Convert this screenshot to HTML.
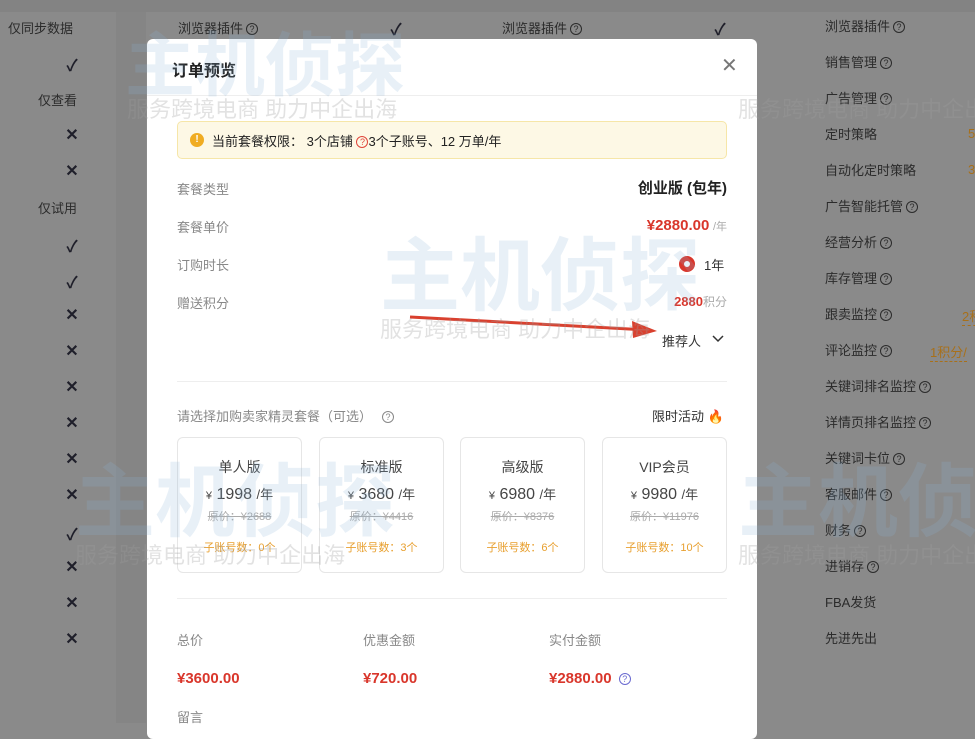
<!DOCTYPE html>
<html><head><meta charset="utf-8"><style>
*{margin:0;padding:0;box-sizing:border-box}
body{width:975px;height:723px;overflow:hidden;position:relative;background:#8a8a8a;font-family:"Liberation Sans","Noto Sans CJK SC",sans-serif;font-size:13px;color:#222}
.a{position:absolute;white-space:nowrap}
.bg{color:#2b2b2b;font-size:13px}
.ic{color:#1f1f2a;font-size:16px;font-weight:bold;width:20px;text-align:center}
.q{display:inline-block;width:12px;height:12px;border:1px solid currentColor;border-radius:50%;font-size:9px;line-height:10px;text-align:center;vertical-align:1px;margin-left:3px}
.modal{position:absolute;left:147px;top:39px;width:610px;height:700px;background:#fff;border-radius:6px}
.lbl{color:#888;font-size:13px}
.red{color:#d9362b}
.card{position:absolute;top:398px;width:125px;height:136px;border:1px solid #e6e6e6;border-radius:6px;text-align:center}
.card .t{margin-top:19px;font-size:14px;color:#444}
.card .p{margin-top:7px;font-size:16px;color:#444}
.card .p small{font-size:11px}
.card .p span{font-size:13px}
.card .o{margin-top:4px;font-size:11px;color:#aaa;text-decoration:line-through}
.card .s{margin-top:15px;font-size:11px;color:#e8a030}
.wm{position:absolute;color:rgba(140,180,215,.2);font-weight:bold;white-space:nowrap}
.ws{position:absolute;white-space:nowrap;font-size:22px;color:rgba(160,160,160,.3)}
</style></head><body>
<div class="a" style="left:116px;top:0;width:30px;height:723px;background:#858585"></div>
<div class="a" style="left:0;top:0;width:975px;height:12px;background:#838383"></div>
<div class="a bg" style="left:8px;top:18px">仅同步数据</div>
<div class="a bg" style="left:38px;top:90px">仅查看</div>
<div class="a bg" style="left:38px;top:198px">仅试用</div>
<div class="a ic" style="left:62px;top:52px">✓</div>
<div class="a ic" style="left:62px;top:125px">✕</div>
<div class="a ic" style="left:62px;top:161px">✕</div>
<div class="a ic" style="left:62px;top:233px">✓</div>
<div class="a ic" style="left:62px;top:269px">✓</div>
<div class="a ic" style="left:62px;top:305px">✕</div>
<div class="a ic" style="left:62px;top:341px">✕</div>
<div class="a ic" style="left:62px;top:377px">✕</div>
<div class="a ic" style="left:62px;top:413px">✕</div>
<div class="a ic" style="left:62px;top:449px">✕</div>
<div class="a ic" style="left:62px;top:485px">✕</div>
<div class="a ic" style="left:62px;top:521px">✓</div>
<div class="a ic" style="left:62px;top:557px">✕</div>
<div class="a ic" style="left:62px;top:593px">✕</div>
<div class="a ic" style="left:62px;top:629px">✕</div>
<div class="a bg" style="left:178px;top:18px">浏览器插件<span class="q">?</span></div>
<div class="a ic" style="left:386px;top:16px">✓</div>
<div class="a bg" style="left:502px;top:18px">浏览器插件<span class="q">?</span></div>
<div class="a ic" style="left:710px;top:16px">✓</div>
<div class="a bg" style="left:825px;top:9px;line-height:36px">浏览器插件<span class="q">?</span><br>销售管理<span class="q">?</span><br>广告管理<span class="q">?</span><br>定时策略<br>自动化定时策略<br>广告智能托管<span class="q">?</span><br>经营分析<span class="q">?</span><br>库存管理<span class="q">?</span><br>跟卖监控<span class="q">?</span><br>评论监控<span class="q">?</span><br>关键词排名监控<span class="q">?</span><br>详情页排名监控<span class="q">?</span><br>关键词卡位<span class="q">?</span><br>客服邮件<span class="q">?</span><br>财务<span class="q">?</span><br>进销存<span class="q">?</span><br>FBA发货<br>先进先出</div>
<div class="a" style="left:968px;top:126px;color:#a8701a">5</div>
<div class="a" style="left:968px;top:162px;color:#a8701a">3</div>
<div class="a" style="left:962px;top:306px;color:#a8701a;border-bottom:1px dashed #a8701a">2积</div>
<div class="a" style="left:930px;top:342px;color:#a8701a;border-bottom:1px dashed #a8701a">1积分/</div>
<div class="modal">
 <div class="a" style="left:25px;top:18px;font-size:16px;font-weight:bold;color:#222">订单预览</div>
 <div class="a" style="left:574px;top:14px;font-size:20px;color:#777">✕</div>
 <div class="a" style="left:0;top:56px;width:610px;height:1px;background:#eee"></div>
 <div class="a" style="left:30px;top:82px;width:550px;height:38px;background:#fdf8e5;border:1px solid #f6e6a8;border-radius:5px"></div>
 <div class="a" style="left:43px;top:94px;width:14px;height:14px;border-radius:50%;background:#f0ac22;color:#fff;font-size:10px;text-align:center;line-height:14px;font-weight:bold">!</div>
 <div class="a" style="left:65px;top:92px;color:#222">当前套餐权限： 3个店铺 <span class="q" style="color:#e0453a;margin:0">?</span>3个子账号、12 万单/年</div>
 <div class="a lbl" style="left:30px;top:140px">套餐类型</div>
 <div class="a" style="right:30px;top:138px;font-size:15px;font-weight:bold;color:#222">创业版 (包年)</div>
 <div class="a lbl" style="left:30px;top:178px">套餐单价</div>
 <div class="a" style="right:30px;top:178px"><span class="red" style="font-size:15px;font-weight:bold">¥2880.00</span> <span style="color:#aaa;font-size:11px">/年</span></div>
 <div class="a lbl" style="left:30px;top:216px">订购时长</div>
 <div class="a" style="left:532px;top:217px;width:16px;height:16px;border-radius:50%;border:5px solid #d9362b"></div>
 <div class="a" style="left:557px;top:216px;color:#333">1年</div>
 <div class="a lbl" style="left:30px;top:254px">赠送积分</div>
 <div class="a" style="right:30px;top:254px"><span class="red" style="font-size:13px;font-weight:bold">2880</span><span style="color:#aaa;font-size:12px">积分</span></div>
 <svg class="a" style="left:260px;top:270px" width="255" height="30"><line x1="3" y1="8" x2="240" y2="21" stroke="#d9402e" stroke-width="3"/><path d="M225 12 L250 22 L226 29 Z" fill="#d9402e"/></svg>
 <div class="a" style="left:515px;top:292px;color:#333">推荐人</div>
 <svg class="a" style="left:565px;top:295px" width="12" height="10"><path d="M1 2 L6 7 L11 2" stroke="#333" stroke-width="1.5" fill="none"/></svg>
 <div class="a" style="left:30px;top:342px;width:550px;height:1px;background:#eee"></div>
 <div class="a lbl" style="left:30px;top:367px">请选择加购卖家精灵套餐（可选）<span class="q" style="margin-left:10px">?</span></div>
 <div class="a" style="left:505px;top:367px;color:#333">限时活动 <span style="color:#f08a1c">🔥</span></div>
 <div class="card" style="left:30px"><div class="t">单人版</div><div class="p"><small>¥</small> 1998 <span>/年</span></div><div class="o">原价：¥2688</div><div class="s">子账号数：0个</div></div>
 <div class="card" style="left:172px"><div class="t">标准版</div><div class="p"><small>¥</small> 3680 <span>/年</span></div><div class="o">原价：¥4416</div><div class="s">子账号数：3个</div></div>
 <div class="card" style="left:313px"><div class="t">高级版</div><div class="p"><small>¥</small> 6980 <span>/年</span></div><div class="o">原价：¥8376</div><div class="s">子账号数：6个</div></div>
 <div class="card" style="left:455px"><div class="t">VIP会员</div><div class="p"><small>¥</small> 9980 <span>/年</span></div><div class="o">原价：¥11976</div><div class="s">子账号数：10个</div></div>
 <div class="a" style="left:30px;top:559px;width:550px;height:1px;background:#eee"></div>
 <div class="a lbl" style="left:30px;top:591px">总价</div>
 <div class="a lbl" style="left:216px;top:591px">优惠金额</div>
 <div class="a lbl" style="left:402px;top:591px">实付金额</div>
 <div class="a red" style="left:30px;top:631px;font-size:15px;font-weight:bold">¥3600.00</div>
 <div class="a red" style="left:216px;top:631px;font-size:15px;font-weight:bold">¥720.00</div>
 <div class="a red" style="left:402px;top:631px;font-size:15px;font-weight:bold">¥2880.00 <span class="q" style="color:#6a6ad0;font-weight:normal">?</span></div>
 <div class="a lbl" style="left:30px;top:668px">留言</div>
</div>
<div class="wm" style="left:125px;top:10px;font-size:70px">主机侦探</div>
<div class="ws" style="left:127px;top:92px">服务跨境电商 助力中企出海</div>
<div class="wm" style="left:380px;top:212px;font-size:80px">主机侦探</div>
<div class="ws" style="left:380px;top:312px">服务跨境电商 助力中企出海</div>
<div class="wm" style="left:75px;top:438px;font-size:80px">主机侦探</div>
<div class="ws" style="left:75px;top:538px">服务跨境电商 助力中企出海</div>
<div class="wm" style="left:738px;top:438px;font-size:80px">主机侦探</div>
<div class="ws" style="left:738px;top:538px">服务跨境电商 助力中企出海</div>
<div class="ws" style="left:738px;top:92px">服务跨境电商 助力中企出海</div>
</body></html>
